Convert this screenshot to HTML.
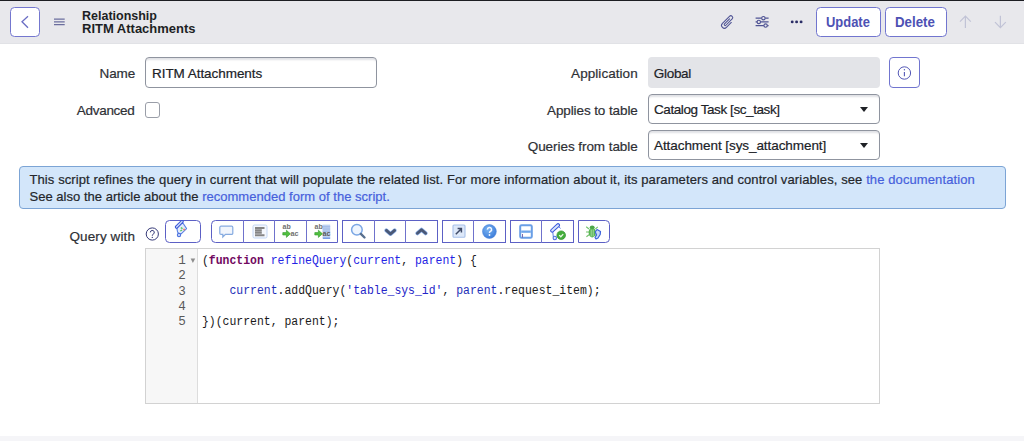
<!DOCTYPE html>
<html><head><meta charset="utf-8">
<style>
*{box-sizing:border-box;margin:0;padding:0}
html,body{width:1024px;height:441px;overflow:hidden;background:#fff;font-family:"Liberation Sans",sans-serif;color:#2e3035}
.a{position:absolute}
.t{position:absolute;line-height:1;white-space:nowrap;-webkit-text-stroke:0.2px currentColor}
#topline{left:0;top:0;width:1024px;height:1px;background:#1c1d22}
#hdr{left:0;top:1px;width:1024px;height:43px;background:#e8e8ec;border-bottom:1px solid #e1e2e6}
.back{left:9.5px;top:6.7px;width:30.5px;height:30.3px;border:1.3px solid #7477cf;border-radius:4.5px;background:#fff}
.title{font-size:13.5px;font-weight:bold;color:#1d1f24;-webkit-text-stroke:0;transform-origin:0 0}
.hbtn{top:7px;height:30px;border:1.3px solid #7175cf;border-radius:4.5px;background:#fff}
.btxt{font-weight:bold;font-size:14.3px;color:#4d51b4;-webkit-text-stroke:0;transform-origin:0 0}
.lbl{font-size:13.5px;color:#2e3035;text-align:right}
.val{font-size:13.5px;color:#202227}
.inp{border:1px solid #8f949f;border-radius:4px;background:#fff;box-shadow:inset 0 3px 2px -1px #e0e1e5}
.tri{width:0;height:0;border-left:4.3px solid transparent;border-right:4.3px solid transparent;border-top:5px solid #1f2126}
#info{left:19px;top:166px;width:987px;height:42.6px;background:#d3e6fa;border:1px solid #7ca4d5;border-bottom-width:1.7px;border-radius:4px}
.itxt{font-size:13px;color:#24262b}
.itxt span{color:#4660dc}
.tb{top:220.2px;height:22.5px;border:1.3px solid #5c60c5;background:#fff}
.tdiv{top:220.2px;width:1.2px;height:22.5px;background:#6f72cc}
#ed{left:145px;top:247.6px;width:735px;height:156.2px;border:1px solid #d2d2d2;background:#fff}
#gut{left:146px;top:248.6px;width:51.8px;height:154.2px;background:#f7f7f7;border-right:1px solid #ddd}
.code{font-family:"Liberation Mono",monospace;font-size:12px;transform:scaleX(0.954);transform-origin:0 0;line-height:15.3px;white-space:pre;color:#1a1a1a;position:absolute}
.ln{font-family:"Liberation Mono",monospace;font-size:12.6px;line-height:15.3px;color:#5a5a5a;text-align:right;white-space:pre;position:absolute}
.kw{color:#72095f;font-weight:bold}
.df{color:#2424e4}
.v{color:#1d2fb8}
.st{color:#2424c8}
#foot{left:0;top:435.5px;width:1024px;height:6px;background:#f5f5f8}
</style></head>
<body>
<div class="a" id="topline"></div>
<div class="a" id="hdr"></div>
<div class="a back"></div>
<svg class="a" style="left:19px;top:15px" width="12" height="14" viewBox="0 0 12 14"><path d="M9 1.3 L3 6.8 L9 12.8" fill="none" stroke="#6a6dc4" stroke-width="1.3"/></svg>
<svg class="a" style="left:54px;top:18px" width="11" height="8" viewBox="0 0 11 8"><path d="M0 1.1h10.7M0 3.8h10.7M0 6.7h10.7" stroke="#6b6e9e" stroke-width="1.3"/></svg>
<div class="t title" style="left:82.3px;top:9.1px;transform:scaleX(0.925)">Relationship</div>
<div class="t title" style="left:82.3px;top:22.2px;transform:scaleX(0.962)">RITM Attachments</div>

<!-- header right icons -->
<svg class="a" style="left:718px;top:12px" width="19" height="19" viewBox="0 0 19 19"><g transform="rotate(45 9.5 9.5) translate(6.2 1)"><path d="M2.9 5.2 V12.3 a0.95 0.95 0 0 0 1.9 0 V3.4 a1.9 1.9 0 0 0 -3.8 0 V13.4 a2.85 2.85 0 0 0 5.7 0 V6.5" fill="none" stroke="#4f5394" stroke-width="1.05" stroke-linecap="round"/></g></svg>
<svg class="a" style="left:755px;top:15px" width="15" height="14" viewBox="0 0 15 14"><path d="M0.6 3.2h13M0.6 6.9h13M0.6 10.6h13" stroke="#4f5394" stroke-width="1.2"/><circle cx="8.4" cy="3.2" r="1.7" fill="#e8e8ec" stroke="#4f5394" stroke-width="1.1"/><circle cx="3.8" cy="6.9" r="1.7" fill="#e8e8ec" stroke="#4f5394" stroke-width="1.1"/><circle cx="10.6" cy="10.6" r="1.7" fill="#e8e8ec" stroke="#4f5394" stroke-width="1.1"/></svg>
<svg class="a" style="left:790px;top:19px" width="13" height="6" viewBox="0 0 13 6"><circle cx="2.2" cy="2.9" r="1.45" fill="#2a2d66"/><circle cx="6.6" cy="2.9" r="1.45" fill="#2a2d66"/><circle cx="11.1" cy="2.9" r="1.45" fill="#2a2d66"/></svg>
<div class="a hbtn" style="left:816.2px;width:64.7px"></div>
<div class="t btxt" style="left:826px;top:14.7px;transform:scaleX(0.905)">Update</div>
<div class="a hbtn" style="left:885.1px;width:61.7px"></div>
<div class="t btxt" style="left:895px;top:14.7px;transform:scaleX(0.93)">Delete</div>
<svg class="a" style="left:959px;top:15px" width="13" height="14" viewBox="0 0 13 14"><path d="M6.4 13V1.2M1 6.6l5.4-5.4L11.8 6.6" fill="none" stroke="#c1c3d6" stroke-width="1.2"/></svg>
<svg class="a" style="left:993.5px;top:15px" width="13" height="14" viewBox="0 0 13 14"><path d="M6.4 0.8V12.6M1 7.2l5.4 5.4L11.8 7.2" fill="none" stroke="#c1c3d6" stroke-width="1.2"/></svg>

<!-- form left -->
<div class="t lbl" style="right:889px;top:67.4px;letter-spacing:-0.15px">Name</div>
<div class="a inp" style="left:145.2px;top:57px;width:231.8px;height:30.6px"></div>
<div class="t val" style="left:152px;top:66.8px;letter-spacing:-0.05px">RITM Attachments</div>
<div class="t lbl" style="right:889.5px;top:103.9px;letter-spacing:-0.3px">Advanced</div>
<div class="a" style="left:145.2px;top:102.3px;width:14.8px;height:15.4px;border:1px solid #9a9ea8;border-radius:3px;background:#fff"></div>

<!-- form right -->
<div class="t lbl" style="right:386.3px;top:67.1px;letter-spacing:0.05px">Application</div>
<div class="a" style="left:647.8px;top:57.4px;width:232.2px;height:30.4px;background:#e3e4e8;border-radius:4px"></div>
<div class="t val" style="left:653.8px;top:67.1px;letter-spacing:-0.3px">Global</div>
<div class="a" style="left:889px;top:57.4px;width:31px;height:30.4px;border:1.3px solid #7175cf;border-radius:4px;background:#fff"></div>
<svg class="a" style="left:897px;top:65px" width="15" height="16" viewBox="0 0 15 16"><circle cx="7.4" cy="8" r="6.2" fill="none" stroke="#5458b6" stroke-width="1"/><path d="M7.4 6.9v4.3" stroke="#5458b6" stroke-width="1.1"/><circle cx="7.4" cy="4.8" r="0.7" fill="#5458b6"/></svg>

<div class="t lbl" style="right:386.3px;top:103.5px;letter-spacing:-0.1px">Applies to table</div>
<div class="a inp" style="left:647.8px;top:94.2px;width:232.2px;height:29.8px"></div>
<div class="t val" style="left:654px;top:103.1px;letter-spacing:-0.42px">Catalog Task [sc_task]</div>
<div class="a tri" style="left:859.8px;top:106.8px"></div>

<div class="t lbl" style="right:386.3px;top:139.6px;letter-spacing:-0.06px">Queries from table</div>
<div class="a inp" style="left:647.8px;top:130.3px;width:232.2px;height:30px"></div>
<div class="t val" style="left:654px;top:138.9px;letter-spacing:-0.07px">Attachment [sys_attachment]</div>
<div class="a tri" style="left:859.8px;top:142.8px"></div>

<div class="a" id="info"></div>
<div class="t itxt" style="left:29.5px;top:173.3px;letter-spacing:0.1px">This script refines the query in current that will populate the related list. For more information about it, its parameters and control variables, see <span>the documentation</span></div>
<div class="t itxt" style="left:29.5px;top:189.6px;letter-spacing:0.02px">See also the article about the <span>recommended form of the script.</span></div>

<div class="t lbl" style="right:889px;top:229.7px;letter-spacing:0.1px">Query with</div>
<svg class="a" style="left:145px;top:226.5px" width="15" height="15" viewBox="0 0 15 15"><circle cx="7.3" cy="7" r="6.1" fill="none" stroke="#363a78" stroke-width="1"/><path d="M5.3 5.4a2 2 0 1 1 2.7 1.9c-.5.25-.7.6-.7 1.4" fill="none" stroke="#363a78" stroke-width="1"/><circle cx="7.3" cy="10.4" r="0.65" fill="#363a78"/></svg>

<!-- toolbar frames -->
<div class="a tb" style="left:165.3px;width:36.2px;border-radius:4.5px"></div>
<div class="a tb" style="left:211px;width:127px;border-radius:4.5px 0 0 4.5px"></div>
<div class="a tdiv" style="left:242.8px"></div>
<div class="a tdiv" style="left:273.8px"></div>
<div class="a tdiv" style="left:305.7px"></div>
<div class="a tb" style="left:342.2px;width:95.5px"></div>
<div class="a tdiv" style="left:373.9px"></div>
<div class="a tdiv" style="left:404.9px"></div>
<div class="a tb" style="left:442px;width:63.5px"></div>
<div class="a tdiv" style="left:473px"></div>
<div class="a tb" style="left:509.8px;width:63.9px"></div>
<div class="a tdiv" style="left:541px"></div>
<div class="a tb" style="left:577.6px;width:32.1px;border-radius:0 4.5px 4.5px 0"></div>

<!-- toolbar icons -->
<!-- script icon -->
<svg class="a" style="left:174px;top:219.5px" width="15" height="18" viewBox="0 0 15 18">
<path d="M2.8 7.8 L8.4 2.2 L12.6 8.6 L7.4 13.6 L5.4 14.2 L3.6 12.2 Z" fill="#e3ecfb" stroke="#5b82e4" stroke-width="1.1" stroke-linejoin="round"/>
<circle cx="5" cy="15" r="1.6" fill="#dfe9fb" stroke="#4f74e0" stroke-width="1.2"/>
<path d="M2.6 7 L8 1.6" stroke="#3551d8" stroke-width="3.4" stroke-linecap="round"/>
<path d="M2.6 7 L8 1.6" stroke="#cddcf8" stroke-width="1.4" stroke-linecap="round"/>
<path d="M6.8 7.6l1.8 1M6.3 11l1.8-1" stroke="#5cc65c" stroke-width="1.3"/><path d="M9.2 9.4h1.8" stroke="#ee7b6b" stroke-width="1.5"/>
</svg>
<!-- comment -->
<svg class="a" style="left:219px;top:225px" width="15" height="14" viewBox="0 0 15 14">
<path d="M2 1.2h10.6a1.2 1.2 0 0 1 1.2 1.2v5.8a1.2 1.2 0 0 1 -1.2 1.2H6.5L3.8 12V9.4H2A1.2 1.2 0 0 1 .8 8.2V2.4A1.2 1.2 0 0 1 2 1.2z" fill="#f1f5fc" stroke="#86abe0" stroke-width="1.2"/>
</svg>
<!-- format -->
<svg class="a" style="left:251.5px;top:223.5px" width="16" height="15" viewBox="0 0 16 15">
<rect x="1" y="1" width="14" height="13" rx="1.5" fill="#f4f7fd" stroke="#c2d5f3" stroke-width="1"/>
<path d="M3 4h9.5M3 6.4h6.8M3 8.8h6.8M3 11.2h9.5" stroke="#858585" stroke-width="2.1"/>
</svg>
<!-- replace -->
<svg class="a" style="left:282px;top:223px" width="18" height="16" viewBox="0 0 18 16">
<text x="0.6" y="6.4" font-family="Liberation Sans" font-size="7" font-weight="bold" fill="#707070">ab</text>
<path d="M0.8 9.6h3.6V7.2l4 3.6-4 3.6v-2.4H0.8z" fill="#52c040" stroke="#2f9a2a" stroke-width=".6"/>
<text x="8.4" y="13.4" font-family="Liberation Sans" font-size="7.2" font-weight="bold" fill="#707070">ac</text>
</svg>
<!-- replace all -->
<svg class="a" style="left:313.5px;top:223px" width="18" height="17" viewBox="0 0 18 17">
<rect x="8.6" y="1.6" width="7.6" height="13.6" fill="#bfd2f1"/>
<path d="M8.6 3.8h7.6M8.6 6h7.6M8.6 8.2h7.6" stroke="#94b0e2" stroke-width=".8"/>
<text x="0.6" y="6.4" font-family="Liberation Sans" font-size="7" font-weight="bold" fill="#707070">ab</text>
<path d="M0.8 9.6h3.6V7.2l4 3.6-4 3.6v-2.4H0.8z" fill="#52c040" stroke="#2f9a2a" stroke-width=".6"/>
<text x="8.6" y="13.4" font-family="Liberation Sans" font-size="7.2" font-weight="bold" fill="#5a5a5a">ac</text>
<path d="M8.8 15.2h7.4" stroke="#4477dd" stroke-width="1"/>
</svg>
<!-- search -->
<svg class="a" style="left:350px;top:223px" width="17" height="17" viewBox="0 0 17 17">
<circle cx="6.9" cy="6.8" r="5.3" fill="#eef5fe" stroke="#7aa6e4" stroke-width="1.5"/>
<path d="M10.9 10.9l3.6 3.6" stroke="#58708f" stroke-width="2.4" stroke-linecap="round"/>
</svg>
<!-- chevron down -->
<svg class="a" style="left:383.5px;top:227.5px" width="13" height="9" viewBox="0 0 13 9">
<path d="M2.4 2.4l4.1 3.6 4.1-3.6" fill="none" stroke="#8fb2ea" stroke-width="4" stroke-linecap="round" stroke-linejoin="round"/>
<path d="M2.4 2.4l4.1 3.6 4.1-3.6" fill="none" stroke="#4a5876" stroke-width="2.8" stroke-linecap="round" stroke-linejoin="round"/>
</svg>
<!-- chevron up -->
<svg class="a" style="left:415px;top:226.5px" width="13" height="9" viewBox="0 0 13 9">
<path d="M2.4 6.3l4.1-3.6 4.1 3.6" fill="none" stroke="#8fb2ea" stroke-width="4" stroke-linecap="round" stroke-linejoin="round"/>
<path d="M2.4 6.3l4.1-3.6 4.1 3.6" fill="none" stroke="#4a5876" stroke-width="2.8" stroke-linecap="round" stroke-linejoin="round"/>
</svg>
<!-- fullscreen -->
<svg class="a" style="left:451.5px;top:224px" width="14" height="14" viewBox="0 0 14 14">
<rect x="1" y="1" width="12" height="12.3" rx="1" fill="#dde8f9" stroke="#a6c0ea" stroke-width="1.1"/>
<path d="M3.8 10.2l5-5M5.6 4.6h3.8v3.8" fill="none" stroke="#3f4a66" stroke-width="1.5"/>
</svg>
<!-- help -->
<svg class="a" style="left:481.5px;top:223.5px" width="15" height="15" viewBox="0 0 15 15">
<defs><radialGradient id="hg" cx="0.4" cy="0.35" r="0.7"><stop offset="0" stop-color="#7ab4f2"/><stop offset="1" stop-color="#3a7ad8"/></radialGradient></defs>
<circle cx="7.4" cy="7.5" r="6.9" fill="url(#hg)" stroke="#4d86dc" stroke-width=".6"/>
<path d="M5.4 5.6a2.1 2.1 0 1 1 3 1.8c-.6.3-.9.6-.9 1.5" fill="none" stroke="#f4f8ff" stroke-width="1.5"/>
<circle cx="7.5" cy="11" r=".9" fill="#f4f8ff"/>
</svg>
<!-- save -->
<svg class="a" style="left:518.5px;top:224px" width="14" height="15" viewBox="0 0 14 15">
<rect x="1.2" y="1.2" width="11.6" height="12.6" rx="1.4" fill="#fff" stroke="#6a9fe6" stroke-width="2"/>
<rect x="2.2" y="6.5" width="9.6" height="2.3" fill="#6ea6ea"/>
<path d="M3.5 10v3.5" stroke="#5a4aa0" stroke-width=".8"/>
</svg>
<!-- validate -->
<svg class="a" style="left:549.5px;top:222.5px" width="17" height="18" viewBox="0 0 17 18">
<path d="M2.6 7.5 L3.4 14.5 M7.8 2.5 L10.5 5.5" fill="none" stroke="#5b82e4" stroke-width="1"/>
<circle cx="4.8" cy="15" r="1.7" fill="#e4ecfb" stroke="#4f74e0" stroke-width="1.1"/>
<path d="M2.2 7.6 L8 2.2" stroke="#3a57dc" stroke-width="4" stroke-linecap="round"/>
<path d="M2.2 7.6 L8 2.2" stroke="#d9e5fa" stroke-width="2" stroke-linecap="round"/>
<circle cx="11.2" cy="12.2" r="4.3" fill="#44ad3c" stroke="#2f9130" stroke-width=".7"/>
<path d="M9.2 12.1l1.6 1.6 2.4-2.6" fill="none" stroke="#e8f8e6" stroke-width="1.3"/>
</svg>
<!-- debug -->
<svg class="a" style="left:585px;top:223.5px" width="18" height="16" viewBox="0 0 18 16">
<path d="M1.2 2.8l2.8 2.2M1 8h3M1.4 12.8l2.6-2M12.8 2.8l-2.4 2.2M12.6 12.8l-2.2-2" stroke="#72c26c" stroke-width="1.1"/>
<ellipse cx="7.2" cy="8.5" rx="3.6" ry="5" fill="#58b552"/>
<ellipse cx="7.2" cy="3.2" rx="2.4" ry="1.8" fill="#4ca647"/>
<path d="M6.2 5.5v7M8.2 5.5v7" stroke="#b9e2b4" stroke-width=".8"/>
<path d="M12 5.5 L15.5 7.5 L15.2 10.5 L13 14 L11 15 L10 13.5 L11.6 11 L10.2 8 Z" fill="#c9daf8" stroke="#3c64dc" stroke-width="1.2" stroke-linejoin="round"/>
</svg>

<!-- editor -->
<div class="a" id="ed"></div>
<div class="a" id="gut"></div>
<div class="ln" style="left:146.3px;top:254px;width:39.5px">1
2
3
4
5</div>
<svg class="a" style="left:189.5px;top:258px" width="6" height="6" viewBox="0 0 6 6"><path d="M0.6 0.6h4.6L2.9 5z" fill="#8e8e8e"/></svg>
<div class="code" style="left:202px;top:253.8px"><span>(</span><span class="kw">function</span> <span class="df">refineQuery</span>(<span class="df">current</span>, <span class="df">parent</span>) {

    <span class="v">current</span>.addQuery(<span class="st">'table_sys_id'</span>, <span class="v">parent</span>.request_item);

})(current, parent);</div>

<div class="a" id="foot"></div>
</body></html>
